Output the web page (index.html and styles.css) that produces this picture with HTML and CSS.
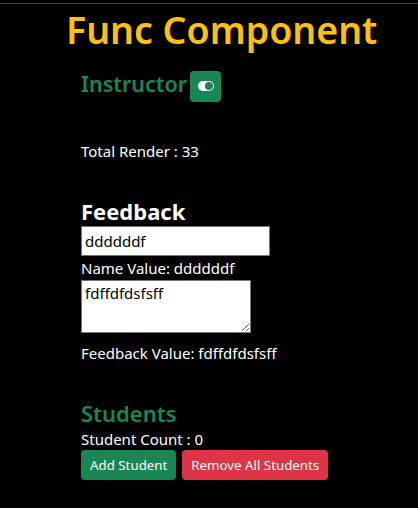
FILE: index.html
```html
<!DOCTYPE html>
<html>
<head>
<meta charset="utf-8">
<link rel="stylesheet" href="styles.css">
</head>
<body>
<div class="topline"></div>
<h1 class="title">Func Component</h1>
<main class="content">
  <div class="instructor">
    <h3 class="green-heading">Instructor</h3>
    <button class="btn btn-success toggle-btn" aria-label="toggle">
      <svg width="16" height="16" viewBox="0 0 16 16" fill="#fff"><path fill-rule="evenodd" d="M5 3a5 5 0 0 0 0 10h6a5 5 0 0 0 0-10zm6 9a4 4 0 1 1 0-8 4 4 0 0 1 0 8"/></svg>
    </button>
  </div>
  <p class="render">Total Render : 33</p>
  <h3 class="feedback-heading">Feedback</h3>
  <input class="name-input" type="text" value="ddddddf">
  <p class="value-line">Name Value: ddddddf</p>
  <textarea class="feedback-input" spellcheck="false">fdffdfdsfsff</textarea>
  <p class="value-line fb-value">Feedback Value: fdffdfdsfsff</p>
  <h3 class="green-heading students">Students</h3>
  <p class="count">Student Count : 0</p>
  <div class="actions">
    <button class="btn btn-success">Add Student</button>
    <button class="btn btn-danger">Remove All Students</button>
  </div>
</main>
</body>
</html>
```
FILE: styles.css
```css
html, body {
  margin: 0;
  padding: 0;
  background: #000;
  color: #fff;
  font-family: "Noto Sans", "Open Sans", sans-serif;
}
.topline {
  height: 3px;
  border-bottom: 1px solid #3c3c3c;
}
.title {
  margin: 0;
  padding: 0 0 0 66px;
  height: 62px;
  font-size: 37.5px;
  line-height: 52px;
  font-weight: 600;
  color: #ffc107;
}
.content {
  padding-left: 81px;
}
.instructor {
  display: flex;
  align-items: center;
  gap: 3px;
  height: 34px;
  margin-top: 1px;
}
.green-heading {
  margin: 0;
  font-size: 21.5px;
  font-weight: 600;
  color: #198754;
  line-height: 30px;
}
.btn {
  border: none;
  border-radius: 4px;
  color: #fff;
  font-family: inherit;
  font-size: 13.3px;
  line-height: 20px;
  padding: 5px 9px;
  cursor: pointer;
}
.btn-success { background: #198754; }
.btn-danger { background: #dc3545; }
.toggle-btn {
  width: 31px;
  height: 31px;
  padding: 0;
  display: flex;
  align-items: center;
  justify-content: center;
  margin-top: 4px;
}
.render {
  margin: 40px 0 0;
  font-size: 15px;
  line-height: 20px;
}
.feedback-heading {
  margin: 35px 0 0;
  font-size: 22px;
  font-weight: 700;
  line-height: 30px;
}
.name-input {
  display: block;
  box-sizing: border-box;
  width: 189px;
  height: 30px;
  margin: 0;
  border: 1px solid #767676;
  padding: 1px 3px;
  font-family: inherit;
  font-size: 15px;
  color: #000;
  background: #fff;
}
.value-line {
  margin: 0;
  font-size: 15px;
  line-height: 24px;
}
.feedback-input {
  display: block;
  box-sizing: border-box;
  width: 170px;
  height: 53px;
  margin: 0;
  border: 1px solid #767676;
  padding: 2px 3px;
  font-family: inherit;
  font-size: 15px;
  color: #000;
  background: #fff;
}
.fb-value {
  margin-top: 8px;
}
.students {
  margin-top: 33px;
  font-size: 22px;
}
.count {
  margin: 1px 0 0;
  font-size: 15px;
  line-height: 20px;
}
.actions {
  display: flex;
  gap: 6px;
  margin-top: 1px;
}
.actions .btn {
  height: 30px;
}
```
